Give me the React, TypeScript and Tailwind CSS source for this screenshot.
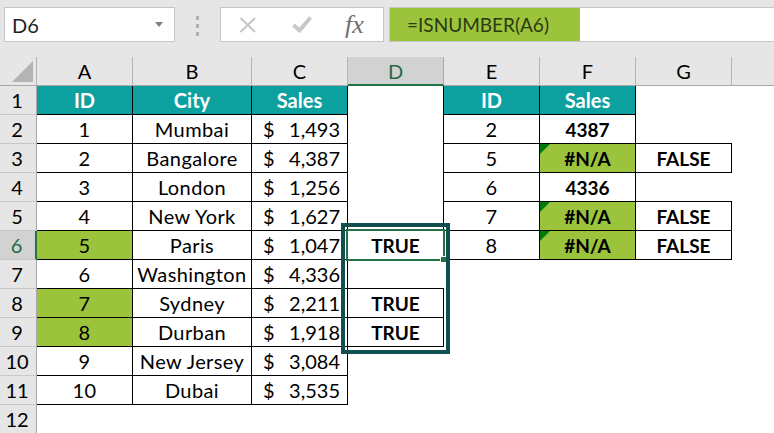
const sans = "font-['Lato','Noto_Sans',sans-serif]";

type Cell = { t?: string; cls?: string; r?: boolean; b?: boolean; tri?: boolean; money?: [string] };

const table = [
  ["1", "Mumbai", "1,493"],
  ["2", "Bangalore", "4,387"],
  ["3", "London", "1,256"],
  ["4", "New York", "1,627"],
  ["5", "Paris", "1,047"],
  ["6", "Washington", "4,336"],
  ["7", "Sydney", "2,211"],
  ["8", "Durban", "1,918"],
  ["9", "New Jersey", "3,084"],
  ["10", "Dubai", "3,535"],
];
const green = new Set([5, 7, 8]);

const right: Record<number, string[]> = {
  2: ["2", "4387", ""],
  3: ["5", "#N/A", "FALSE"],
  4: ["6", "4336", ""],
  5: ["7", "#N/A", "FALSE"],
  6: ["8", "#N/A", "FALSE"],
};

const strong = "text-[19px] font-bold";
const plain = "tracking-[0.4px]";

function Box({ c }: { c: Cell }) {
  return (
    <div
      className={`relative flex h-[29px] min-w-0 items-center justify-center overflow-visible whitespace-nowrap ${
        c.r ? "border-r border-r-black" : ""
      } ${c.b ? "border-b border-b-black" : ""} ${c.cls ?? ""}`}
    >
      {c.tri && (
        <svg className="absolute left-0 top-0" width="10" height="10" viewBox="0 0 10 10">
          <polygon points="0,0 10,0 0,10" fill="#007a0c" />
        </svg>
      )}
      {c.money ? (
        <div className="flex w-full justify-between pl-[11px] pr-[7px]">
          <span>$</span>
          <span>{c.money[0]}</span>
        </div>
      ) : (
        c.t
      )}
    </div>
  );
}

function RowHead({ n }: { n: number }) {
  return (
    <div
      className={`flex h-[29px] items-center justify-center border-b border-b-[#c8c8c8] pr-[2px] ${
        n === 6
          ? "border-r-2 border-r-[#217346] bg-[#d2d2d2] text-[#1d6b43]"
          : "border-r border-r-[#a8a8a8] bg-[#e6e6e6] text-black"
      }`}
    >
      {n}
    </div>
  );
}

function ColHead({ t, active }: { t: string; active?: boolean }) {
  return (
    <div
      className={`flex h-[29px] items-center justify-center ${
        active
          ? "border-b-2 border-r border-b-[#217346] border-r-[#a8a8a8] bg-[#d2d2d2] text-[#1d6b43]"
          : "border-b border-r border-b-[#a8a8a8] border-r-[#b4b4b4] bg-[#e6e6e6] text-black"
      }`}
    >
      {t}
    </div>
  );
}

function buildRow(n: number): Cell[] {
  const cells: Cell[] = [];
  const teal = "bg-[#0ca19f] font-bold text-white";
  if (n === 1) {
    cells.push({ t: "ID", cls: teal, r: true, b: true }, { t: "City", cls: teal, r: true, b: true }, { t: "Sales", cls: teal, r: true, b: true });
  } else if (n <= 11) {
    const [id, city, sales] = table[n - 2];
    cells.push(
      { t: id, r: true, b: true, cls: `${plain} ${green.has(Number(id)) ? "bg-[#9bc33c]" : ""}` },
      { t: city, r: true, b: true, cls: plain },
      { money: [sales], r: true, b: true },
    );
  } else {
    cells.push({}, {}, {});
  }
  // column D
  if (n <= 5) cells.push({ r: true, b: n === 5 });
  else if (n === 6) cells.push({ t: "TRUE", cls: strong, r: true, b: true });
  else if (n === 7) cells.push({ b: true });
  else if (n === 8 || n === 9) cells.push({ t: "TRUE", cls: strong, r: true, b: true });
  else cells.push({});
  // columns E, F, G
  if (n === 1) {
    cells.push({ t: "ID", cls: teal, r: true, b: true }, { t: "Sales", cls: teal, r: true, b: true }, {});
  } else if (right[n]) {
    const [e, f, g] = right[n];
    const na = f === "#N/A";
    cells.push(
      { t: e, r: true, b: true, cls: plain },
      { t: f, r: true, b: true, tri: na, cls: na ? `bg-[#9bc33c] ${strong}` : strong },
      { t: g, cls: strong, r: !!g, b: true },
    );
  } else {
    cells.push({}, {}, {});
  }
  return cells;
}

export default function App() {
  const rows = Array.from({ length: 12 }, (_, i) => i + 1);
  return (
    <div className={`relative h-[433px] w-[774px] overflow-hidden bg-white text-[20px] leading-none text-black ${sans}`}>
      {/* formula bar area */}
      <div className="flex h-[57px] items-start bg-[#e6e6e6] pl-[4px] pt-[7px]">
        <div className="flex h-[35px] w-[171px] items-center justify-between border border-[#c6c6c6] bg-white pl-[7px] pr-[10px] text-[#1f1f1f]">
          <span>D6</span>
          <svg width="9" height="5" viewBox="0 0 9 5">
            <polygon points="0,0 8,0 4,5" fill="#7f7f7f" />
          </svg>
        </div>
        <div className="flex w-[45px] flex-col items-center gap-[4px] pt-[9px]">
          <div className="h-[4px] w-[3px] bg-[#b0b0b0]" />
          <div className="h-[4px] w-[3px] bg-[#b0b0b0]" />
          <div className="h-[4px] w-[3px] bg-[#b0b0b0]" />
        </div>
        <div className="flex h-[35px] w-[164px] items-center border border-[#c6c6c6] bg-white pl-[18px]">
          <svg width="18" height="16" viewBox="0 0 18 16" fill="none" stroke="#c8c8c8" strokeWidth="2.2">
            <path d="M1.5 1 L16 15 M16 1 L1.5 15" />
          </svg>
          <svg className="ml-[35px]" width="20" height="17" viewBox="0 0 20 17" fill="none" stroke="#c8c8c8" strokeWidth="3.8">
            <path d="M1.5 9 L7.5 14.5 L18.5 1.5" />
          </svg>
          <span className="ml-[33px] font-['Liberation_Serif',serif] text-[26px] italic text-[#707070]">fx</span>
        </div>
        <div className="ml-[5px] flex h-[35px] flex-1 items-center border-y border-l border-[#c6c6c6] bg-white">
          <div className="flex h-full w-[190px] items-center bg-[#9bc33c] pl-[17px] text-[19px] text-[#2b3a10]">=ISNUMBER(A6)</div>
        </div>
      </div>

      {/* sheet */}
      <div className="grid grid-cols-[37px_96px_119px_96px_96px_96px_96px_96px_1fr]">
        <div className="flex h-[29px] items-end justify-end border-b border-r border-b-[#a8a8a8] border-r-[#b4b4b4] bg-[#e6e6e6] pb-[3px] pr-[3px]">
          <svg width="21" height="21" viewBox="0 0 21 21">
            <polygon points="21,0 21,21 0,21" fill="#b4b4b4" />
          </svg>
        </div>
        {["A", "B", "C"].map((c) => (
          <ColHead key={c} t={c} />
        ))}
        <ColHead t="D" active />
        {["E", "F", "G"].map((c) => (
          <ColHead key={c} t={c} />
        ))}
        <div className="h-[29px] border-b border-b-[#a8a8a8] bg-[#e6e6e6]" />
        {rows.map((n) => (
          <div key={n} className="contents">
            <RowHead n={n} />
            {buildRow(n).map((c, i) => (
              <Box key={i} c={c} />
            ))}
            <div />
          </div>
        ))}
      </div>

      {/* selected cell */}
      <div className="absolute left-[346px] top-[229px] h-[32px] w-[99px] border-2 border-[#217346]" />
      <div className="absolute left-[440px] top-[256px] h-[7px] w-[7px] border border-white bg-[#217346]" />
      {/* highlight rectangle */}
      <div className="absolute left-[341px] top-[223px] h-[131px] w-[109px] border-[4px] border-[#11504f]" />
    </div>
  );
}
